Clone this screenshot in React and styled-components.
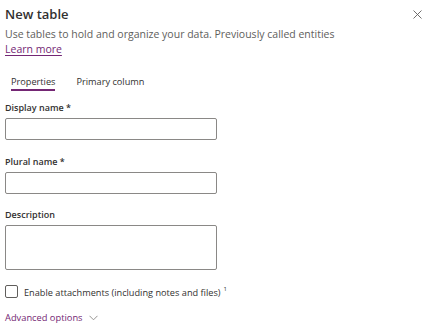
import React, { useState } from 'react';
import styled, { createGlobalStyle } from 'styled-components';

const GlobalStyle = createGlobalStyle`
  html, body {
    margin: 0;
    padding: 0;
    background: #ffffff;
  }
  body {
    font-family: 'Open Sans', 'Noto Sans', sans-serif;
    color: #323130;
  }
`;

const Panel = styled.div`
  width: 433px;
  height: 334px;
  box-sizing: border-box;
  padding: 4px 12px 0 5px;
  overflow: hidden;
`;

const Header = styled.div`
  display: flex;
  justify-content: space-between;
  align-items: flex-start;
`;

const Title = styled.h1`
  margin: 0;
  font-size: 13px;
  line-height: 20px;
  font-weight: 600;
  color: #323130;
`;

const CloseButton = styled.button`
  display: flex;
  align-items: center;
  justify-content: center;
  width: 20px;
  height: 20px;
  margin-right: -6px;
  padding: 0;
  border: none;
  background: none;
  color: #605e5c;
  cursor: pointer;
`;

const Intro = styled.p`
  margin: 3px 0 0;
  font-size: 10.5px;
  line-height: 15px;
  color: #605e5c;
`;

const LearnMore = styled.a`
  color: #742774;
  text-decoration: underline;
  text-underline-offset: 2px;
  cursor: pointer;
`;

const Tabs = styled.div`
  display: flex;
  gap: 21px;
  margin: 18px 0 0 6px;
`;

const Tab = styled.button`
  padding: 0;
  border: none;
  border-bottom: 2px solid ${p => (p.$active ? '#742774' : 'transparent')};
  background: none;
  font-family: inherit;
  font-size: 9.2px;
  line-height: 14px;
  color: #323130;
  cursor: pointer;
`;

const Field = styled.div`
  display: flex;
  flex-direction: column;
  gap: 3px;
  margin-top: ${p => p.$gap}px;
`;

const Label = styled.label`
  font-size: 9px;
  line-height: 14px;
  font-weight: 600;
  color: #323130;
`;

const TextInput = styled.input`
  box-sizing: border-box;
  width: 212px;
  height: 22px;
  margin: 0;
  padding: 0 6px;
  border: 1px solid #8a8886;
  border-radius: 2px;
  font-family: inherit;
  font-size: 9.2px;
  outline: none;
`;

const TextArea = styled.textarea`
  box-sizing: border-box;
  width: 212px;
  height: 45px;
  margin: 0;
  padding: 4px 6px;
  border: 1px solid #8a8886;
  border-radius: 2px;
  font-family: inherit;
  font-size: 9.2px;
  resize: none;
  outline: none;
`;

const CheckRow = styled.label`
  display: flex;
  align-items: center;
  gap: 6px;
  margin-top: 13px;
  font-size: 9.2px;
  line-height: 13px;
  color: #323130;
  cursor: pointer;
`;

const Box = styled.span`
  box-sizing: border-box;
  width: 13px;
  height: 13px;
  border: 1px solid #605e5c;
  border-radius: 2px;
  background: ${p => (p.$checked ? '#742774' : '#fff')};
`;

const Sup = styled.sup`
  font-size: 6px;
  margin-left: 3px;
  vertical-align: 5px;
`;

const Advanced = styled.button`
  display: flex;
  align-items: center;
  gap: 6px;
  margin-top: 12px;
  padding: 0;
  border: none;
  background: none;
  font-family: inherit;
  font-size: 9.3px;
  line-height: 14px;
  color: #742774;
  cursor: pointer;
`;

const CloseIcon = () => (
  <svg width="9" height="9" viewBox="0 0 9 9">
    <path d="M0.5 0.5 L8.5 8.5 M8.5 0.5 L0.5 8.5" stroke="currentColor" strokeWidth="0.9" fill="none" />
  </svg>
);

const ChevronDown = () => (
  <svg width="9" height="6" viewBox="0 0 9 6">
    <path d="M0.5 0.8 L4.5 4.8 L8.5 0.8" stroke="#8a8886" strokeWidth="0.9" fill="none" />
  </svg>
);

export default function App() {
  const [tab, setTab] = useState('properties');
  const [attach, setAttach] = useState(false);

  return (
    <>
      <GlobalStyle />
      <Panel>
        <Header>
          <Title>New table</Title>
          <CloseButton aria-label="Close">
            <CloseIcon />
          </CloseButton>
        </Header>
        <Intro>
          Use tables to hold and organize your data. Previously called entities
          <br />
          <LearnMore>Learn more</LearnMore>
        </Intro>

        <Tabs>
          <Tab $active={tab === 'properties'} onClick={() => setTab('properties')}>Properties</Tab>
          <Tab $active={tab === 'primary'} onClick={() => setTab('primary')}>Primary column</Tab>
        </Tabs>

        <Field $gap={10}>
          <Label>Display name *</Label>
          <TextInput />
        </Field>
        <Field $gap={15}>
          <Label>Plural name *</Label>
          <TextInput />
        </Field>
        <Field $gap={14}>
          <Label>Description</Label>
          <TextArea />
        </Field>

        <CheckRow onClick={() => setAttach(!attach)}>
          <Box $checked={attach} />
          <span>
            Enable attachments (including notes and files)<Sup>1</Sup>
          </span>
        </CheckRow>

        <Advanced>
          Advanced options
          <ChevronDown />
        </Advanced>
      </Panel>
    </>
  );
}
